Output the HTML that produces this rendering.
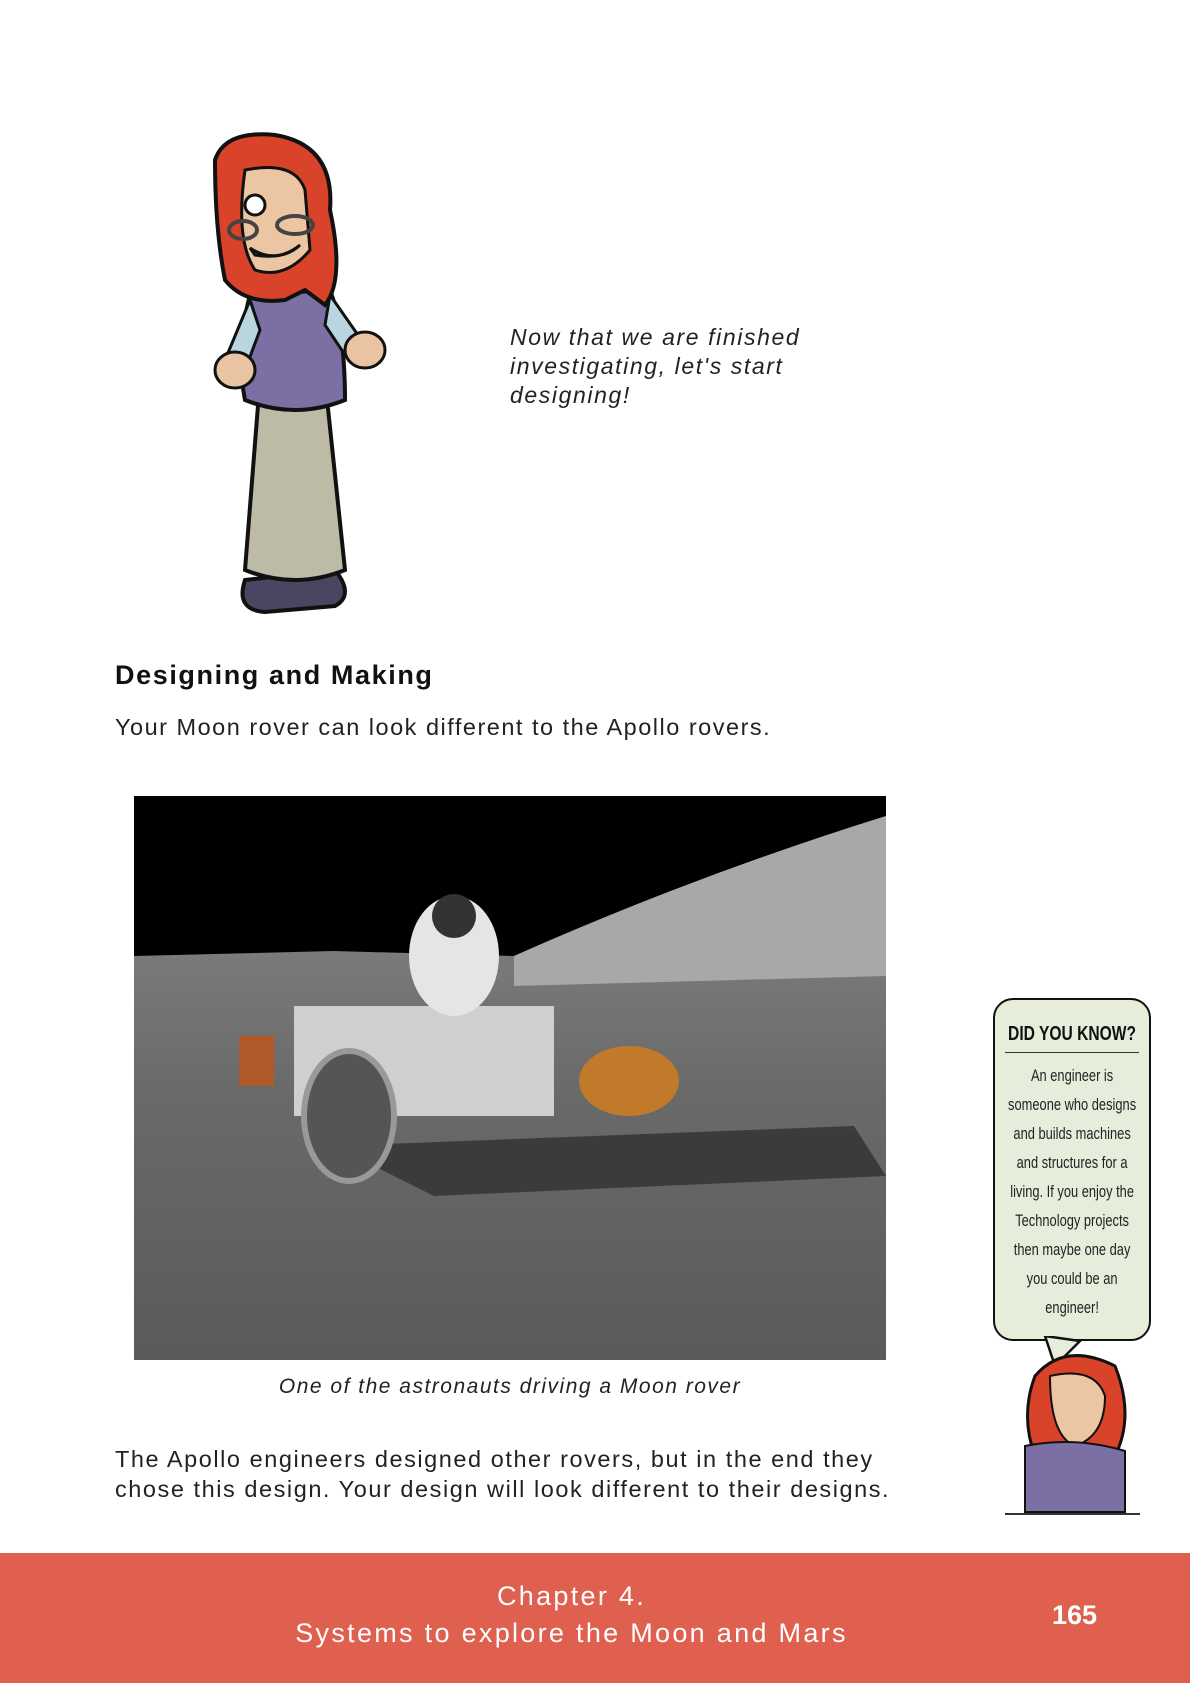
<!DOCTYPE html>
<html><head><meta charset="utf-8"><style>
body{margin:0;width:1190px;height:1683px;position:relative;background:#fff;font-family:"Liberation Sans",sans-serif;color:#222;overflow:hidden}
.a{position:absolute}
.it{font-style:italic;font-size:23px;line-height:29px}
.w{width:220px;margin-left:-33px;text-align:center}
.nar{display:inline-block;transform:scaleX(.78);transform-origin:center top;white-space:nowrap}
</style></head><body>
<svg class="a" style="left:205px;top:130px" width="240" height="485" viewBox="0 0 240 485">
<path d="M40 450 Q30 480 60 482 L130 476 Q150 465 130 440 Z" fill="#4a4560" stroke="#111" stroke-width="4"/>
<path d="M55 250 L40 440 Q90 460 140 440 L120 250 Z" fill="#bdbaa5" stroke="#111" stroke-width="4"/>
<path d="M45 165 Q30 220 40 270 Q90 290 140 270 Q140 200 125 160 Z" fill="#7b6fa3" stroke="#111" stroke-width="4"/>
<path d="M45 170 L20 230 L40 240 L55 200Z M125 165 L160 215 L140 225 L120 195Z" fill="#b9d6e0" stroke="#111" stroke-width="3"/>
<ellipse cx="30" cy="240" rx="20" ry="18" fill="#e9c3a2" stroke="#111" stroke-width="3"/>
<ellipse cx="160" cy="220" rx="20" ry="18" fill="#e9c3a2" stroke="#111" stroke-width="3"/>
<path d="M10 30 Q20 0 70 5 Q130 15 125 80 Q140 150 120 175 L100 160 L80 170 Q40 175 20 150 Q10 100 10 30Z" fill="#d9432a" stroke="#111" stroke-width="4"/>
<path d="M40 40 Q90 30 100 60 L105 120 Q80 150 50 140 Q30 110 40 40Z" fill="#ecc6a3" stroke="#111" stroke-width="3"/>
<circle cx="50" cy="75" r="10" fill="#fff" stroke="#111" stroke-width="3"/>
<ellipse cx="38" cy="100" rx="14" ry="9" fill="none" stroke="#444" stroke-width="4"/>
<ellipse cx="90" cy="95" rx="18" ry="9" fill="none" stroke="#444" stroke-width="4"/>
<path d="M45 118 Q70 135 95 115 Q80 130 50 125Z" fill="#fff" stroke="#111" stroke-width="3"/>
</svg>
<div class="a it" style="left:510px;top:323px;letter-spacing:1.6px">Now that we are finished<br>investigating, let's start<br>designing!</div>
<div class="a" style="left:115px;top:660px;font-size:27px;font-weight:bold;color:#111;letter-spacing:1.6px">Designing and Making</div>
<div class="a" style="left:115px;top:714px;font-size:23.5px;letter-spacing:1.5px">Your Moon rover can look different to the Apollo rovers.</div>
<div class="a" style="left:134px;top:796px;width:752px;height:564px;overflow:hidden;background:#000">
<svg width="752" height="564" viewBox="0 0 752 564">
<defs><linearGradient id="g" x1="0" y1="0" x2="0" y2="1"><stop offset="0" stop-color="#8a8a8a"/><stop offset="0.5" stop-color="#6a6a6a"/><stop offset="1" stop-color="#5a5a5a"/></linearGradient></defs>
<path d="M0 160 L200 155 L380 160 Q560 80 752 20 L752 564 L0 564Z" fill="url(#g)"/>
<path d="M380 160 Q560 80 752 20 L752 180 L380 190Z" fill="#a8a8a8"/>
<path d="M200 350 L720 330 L752 380 L300 400Z" fill="#2a2a2a" opacity=".7"/>
<rect x="160" y="210" width="260" height="110" fill="#cfcfcf"/>
<ellipse cx="215" cy="320" rx="45" ry="65" fill="#555" stroke="#999" stroke-width="6"/>
<ellipse cx="495" cy="285" rx="50" ry="35" fill="#c07a2a"/>
<rect x="105" y="240" width="35" height="50" fill="#b05a2a"/>
<ellipse cx="320" cy="160" rx="45" ry="60" fill="#e5e5e5"/>
<circle cx="320" cy="120" r="22" fill="#333"/>
</svg></div>
<div class="a it" style="left:134px;width:752px;text-align:center;top:1372px;font-size:21px;letter-spacing:1.5px">One of the astronauts driving a Moon rover</div>
<div class="a" style="left:115px;top:1444px;font-size:23.5px;line-height:30px;letter-spacing:1.55px">The Apollo engineers designed other rovers, but in the end they<br>chose this design. Your design will look different to their designs.</div>
<div class="a" style="left:993px;top:998px;width:154px;height:339px;border:2.5px solid #111;border-radius:20px;background:#e6eedb;text-align:center">
<div class="w" style="margin-top:23px;height:22px"><span class="nar" style="font-weight:bold;font-size:20px;color:#111">DID YOU KNOW?</span></div>
<div style="border-top:1px solid #333;margin:7px 10px 0"></div>
<div class="w" style="font-size:16.5px;line-height:29px;margin-top:9px"><span class="nar">An engineer is<br>someone who designs<br>and builds machines<br>and structures for a<br>living. If you enjoy the<br>Technology projects<br>then maybe one day<br>you could be an<br>engineer!</span></div></div>
<svg class="a" style="left:1005px;top:1336px" width="140" height="180" viewBox="0 0 140 180">
<path d="M40 0 L50 30 L75 5Z" fill="#e6eedb" stroke="#111" stroke-width="2.5"/>
<path d="M30 40 Q60 5 110 30 Q130 80 110 120 L30 120 Q15 80 30 40Z" fill="#d9432a" stroke="#111" stroke-width="3"/>
<path d="M45 40 Q90 30 100 60 Q100 100 70 110 Q45 100 45 40Z" fill="#ecc6a3" stroke="#111" stroke-width="2"/>
<path d="M20 110 Q70 100 120 115 L120 176 L20 176Z" fill="#7b6fa3" stroke="#111" stroke-width="2"/>
<line x1="0" y1="178" x2="135" y2="178" stroke="#333" stroke-width="2"/>
</svg>
<div class="a" style="left:0;top:1553px;width:1190px;height:130px;background:#e0604f;color:#fff">
<div class="a" style="left:0;width:1143px;text-align:center;top:25px;font-size:27px;line-height:37px;letter-spacing:2.3px">Chapter 4.<br>Systems to explore the Moon and Mars</div>
<div class="a" style="left:1052px;top:47px;font-size:27px;font-weight:bold">165</div>
</div>
</body></html>
